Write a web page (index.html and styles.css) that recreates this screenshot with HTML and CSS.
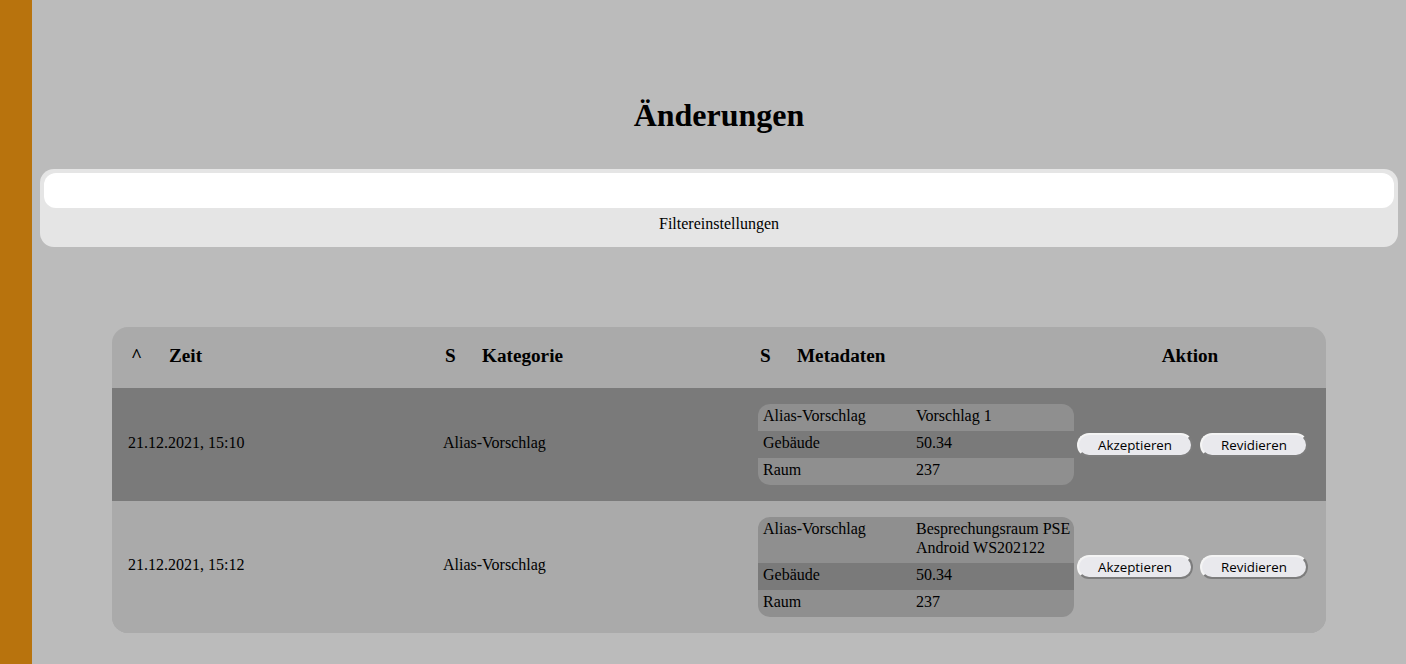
FILE: index.html
```html
<!DOCTYPE html>
<html lang="de">
<head>
<meta charset="utf-8">
<title>Änderungen</title>
<link rel="stylesheet" href="styles.css">
</head>
<body>
<div class="layout">
  <aside class="sidebar"></aside>
  <main class="main">
    <h1 class="title">Änderungen</h1>
    <section class="filter">
      <div class="filter-input"></div>
      <div class="filter-label">Filtereinstellungen</div>
    </section>
    <table class="changes">
      <colgroup>
        <col class="c-time"><col class="c-cat"><col class="c-meta"><col class="c-act">
      </colgroup>
      <thead>
        <tr>
          <th class="h-cell"><span class="sort sort-up">^</span>Zeit</th>
          <th class="h-cell"><span class="sort">S</span>Kategorie</th>
          <th class="h-cell"><span class="sort">S</span>Metadaten</th>
          <th class="h-cell h-act">Aktion</th>
        </tr>
      </thead>
      <tbody>
        <tr class="row dark">
          <td class="cell cell-text">21.12.2021, 15:10</td>
          <td class="cell cell-text">Alias-Vorschlag</td>
          <td class="cell cell-meta">
            <table class="meta">
              <colgroup><col class="m-key"><col class="m-val"></colgroup>
              <tr><td>Alias-Vorschlag</td><td>Vorschlag 1</td></tr>
              <tr><td>Gebäude</td><td>50.34</td></tr>
              <tr><td>Raum</td><td>237</td></tr>
            </table>
          </td>
          <td class="cell cell-act">
            <div class="actions"><button class="btn">Akzeptieren</button><button class="btn">Revidieren</button></div>
          </td>
        </tr>
        <tr class="row light">
          <td class="cell cell-text">21.12.2021, 15:12</td>
          <td class="cell cell-text">Alias-Vorschlag</td>
          <td class="cell cell-meta">
            <table class="meta">
              <colgroup><col class="m-key"><col class="m-val"></colgroup>
              <tr><td>Alias-Vorschlag</td><td>Besprechungsraum PSE Android WS202122</td></tr>
              <tr><td>Gebäude</td><td>50.34</td></tr>
              <tr><td>Raum</td><td>237</td></tr>
            </table>
          </td>
          <td class="cell cell-act">
            <div class="actions"><button class="btn">Akzeptieren</button><button class="btn">Revidieren</button></div>
          </td>
        </tr>
      </tbody>
    </table>
  </main>
</div>
</body>
</html>
```
FILE: styles.css
```css
html, body {
  margin: 0;
  padding: 0;
  height: 100%;
}
body {
  background: #bbbbbb;
  font-family: "Liberation Serif", "Times New Roman", serif;
  font-size: 16px;
  color: #000;
}
.layout {
  display: flex;
  min-height: 100%;
}
.sidebar {
  width: 32px;
  flex: 0 0 32px;
  background: #b8730d;
}
.main {
  flex: 1;
  min-width: 0;
}
.title {
  margin: 97px 0 35px;
  text-align: center;
  font-size: 32px;
  font-weight: bold;
  line-height: 37px;
}
.filter {
  margin: 0 8px;
  background: #e5e5e5;
  border-radius: 14px;
  padding: 4px 4px 0;
}
.filter-input {
  height: 35px;
  background: #fff;
  border-radius: 12px;
}
.filter-label {
  text-align: center;
  line-height: 19px;
  padding: 6px 0 14px;
}
.changes {
  margin: 80px 80px 0;
  width: calc(100% - 160px);
  border-collapse: separate;
  border-spacing: 0;
  table-layout: fixed;
  background: #aaaaaa;
  border-radius: 16px;
  overflow: hidden;
}
.c-time, .c-cat { width: 315px; }
.c-meta { width: 332px; }
.c-act { width: auto; }
.h-cell {
  height: 57px;
  padding: 0 0 4px 16px;
  text-align: left;
  font-size: 19.2px;
  font-weight: bold;
  vertical-align: middle;
}
.h-act {
  text-align: center;
  padding: 0 20px 4px 0;
}
.sort {
  display: inline-block;
  width: 40px;
  padding-left: 2px;
  margin-right: -3px;
}
.sort-up {
  padding-left: 3px;
  margin-right: -2px;
}
.row.dark { background: #7a7a7a; }
.row.light { background: #aaaaaa; }
.cell {
  padding: 16px 0 16px 16px;
  vertical-align: middle;
}
.cell-text {
  padding-bottom: 20px;
}
.cell-act {
  padding: 0 20px 0 3px;
}
.meta {
  width: 316px;
  table-layout: fixed;
  border-collapse: separate;
  border-spacing: 0;
  border-radius: 12px;
  overflow: hidden;
}
.m-key { width: 153px; }
.m-val { width: 163px; }
.meta td {
  padding: 2px 0 6px 5px;
  line-height: 19px;
  vertical-align: top;
}
.meta tr:nth-child(odd) { background: #8f8f8f; }
.meta tr:nth-child(even) { background: #7a7a7a; }
.actions {
  display: flex;
  gap: 7px;
  align-items: center;
}
.btn {
  font-family: "Open Sans", "Noto Sans", sans-serif;
  font-size: 13.333px;
  line-height: 18px;
  padding: 1px 19px;
  background: #e9e9ed;
  color: #000;
  border: 2px solid;
  border-color: #f4f4f4 #7d7d7d #7d7d7d #f4f4f4;
  border-radius: 12px;
}
```
